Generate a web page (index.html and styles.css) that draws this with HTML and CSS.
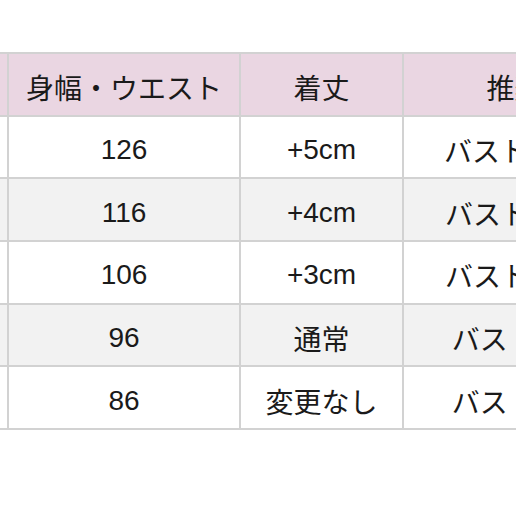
FILE: index.html
```html
<!DOCTYPE html>
<html lang="ja">
<head>
<meta charset="utf-8">
<link rel="stylesheet" href="styles.css">
</head>
<body>
<div class="frame">
<table class="size-table">
  <colgroup>
    <col class="c1"><col class="c2"><col class="c3"><col class="c4">
  </colgroup>
  <thead>
    <tr><th>サイズ</th><th>身幅・ウエスト</th><th>着丈</th><th>推奨サイズ</th></tr>
  </thead>
  <tbody>
    <tr><td>5L</td><td>126</td><td>+5cm</td><td>バスト126-136cm</td></tr>
    <tr class="alt"><td>4L</td><td>116</td><td>+4cm</td><td>バスト116-126cm</td></tr>
    <tr><td>3L</td><td>106</td><td>+3cm</td><td>バスト106-116cm</td></tr>
    <tr class="alt"><td>2L</td><td>96</td><td>通常</td><td>バスト96-106cm</td></tr>
    <tr><td>L</td><td>86</td><td>変更なし</td><td>バスト86-100cm</td></tr>
  </tbody>
</table>
</div>
</body>
</html>
```
FILE: styles.css
```css
html, body {
  margin: 0;
  padding: 0;
  background: #ffffff;
}
body {
  width: 516px;
  height: 516px;
  overflow: hidden;
}
.frame {
  padding-top: 52px;
  width: 516px;
  overflow: hidden;
}
.size-table {
  margin-left: -94px;
  border-collapse: collapse;
  table-layout: fixed;
  width: 710px;
  font-family: "Liberation Sans", "Noto Sans CJK JP", sans-serif;
  font-size: 28px;
  color: #1a1a1a;
}
.c1 { width: 101px; }
.c2 { width: 232px; }
.c3 { width: 163px; }
.c4 { width: 306px; }
.size-table th,
.size-table td {
  border: 2px solid #d2d2d2;
  height: 54.7px;
  padding: 6px 0 0 0;
  text-align: center;
  vertical-align: middle;
  white-space: nowrap;
  overflow: hidden;
}
.size-table th {
  background: #ead6e2;
  font-weight: normal;
  font-family: "Noto Sans CJK JP", sans-serif;
}
.size-table tr.alt td {
  background: #f2f2f2;
}
```
